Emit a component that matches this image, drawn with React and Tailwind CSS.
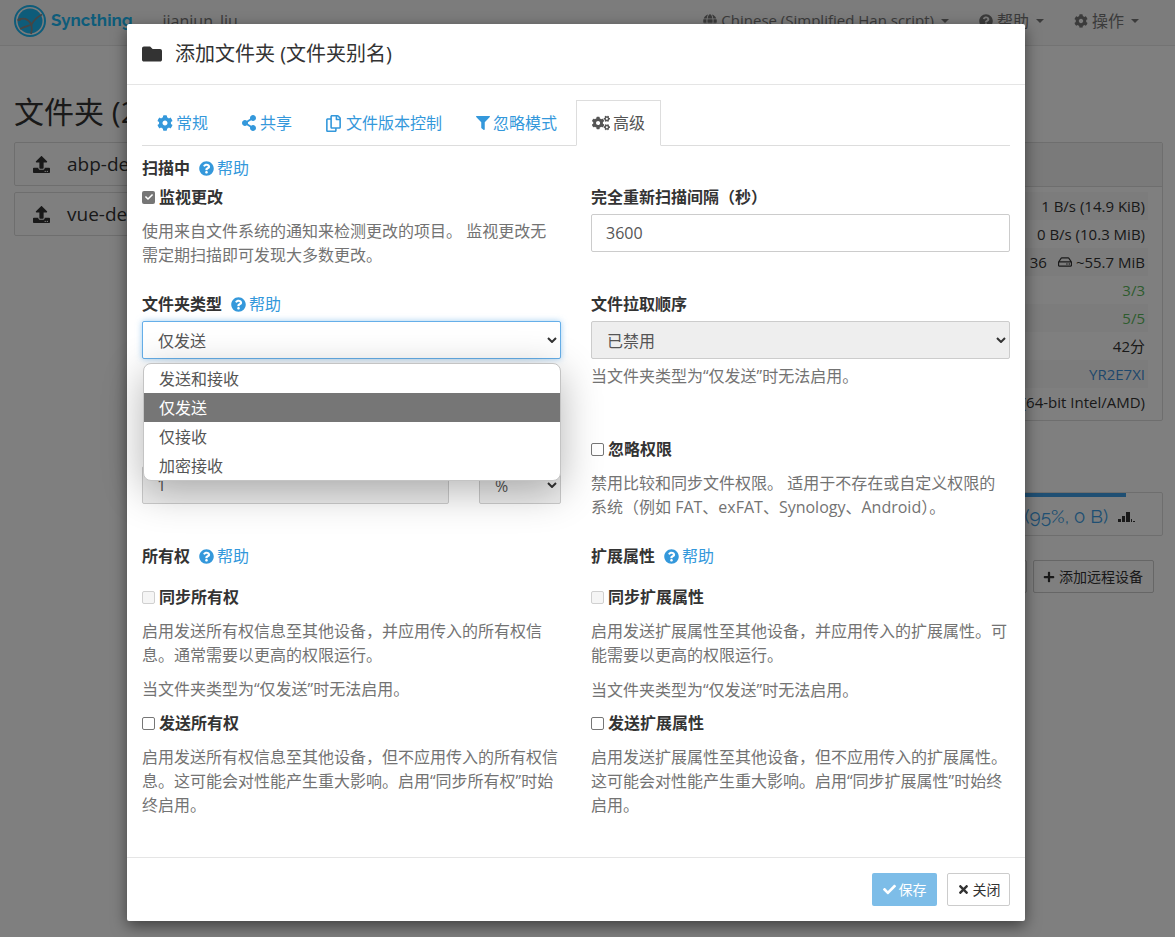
import { FaCheck, FaCog, FaCogs, FaFilter, FaFolder, FaGlobe, FaPlus, FaQuestionCircle, FaRegCopy, FaRegHdd, FaShareAlt, FaTimes, FaUpload } from "react-icons/fa";

const font = "font-['Open_Sans','Noto_Sans_CJK_SC',sans-serif]";

const statusRows = [
  ["rate-in", "1 B/s (14.9 KiB)", "text-[#333]"],
  ["rate-out", "0 B/s (10.3 MiB)", "text-[#333]"],
  ["state", "36", "text-[#333]"],
  ["listeners", "3/3", "text-[#5cb85c]"],
  ["discovery", "5/5", "text-[#5cb85c]"],
  ["uptime", "42分", "text-[#333]"],
  ["id", "YR2E7XI", "text-[#3e90d8]"],
  ["version", "(64-bit Intel/AMD)", "text-[#333]"],
];

function Logo() {
  return (
    <svg viewBox="0 0 32 32" className="h-8 w-8 shrink-0">
      <circle cx="16" cy="16" r="15" fill="none" stroke="#1cb8f5" strokeWidth="2" />
      <circle cx="16" cy="16" r="12.500" fill="#1cb8f5" />
      <path d="M3.500 15.500C9 11.500 14 14 17.500 19.500 20 15 23 12 28 9.500M17.500 19.500C14 21 10 22 6 24M17.500 19.500C18 23 18 26 17 29" fill="none" stroke="#8a8a8a" strokeWidth="1.800" />
      <circle cx="5.500" cy="14.500" r="1.500" fill="#8a8a8a" />
    </svg>
  );
}

function FolderPanel({ name }) {
  return (
    <div className="flex h-[44px] items-center rounded-[2px] border border-[#ddd] bg-white pl-[18px] text-[#333]">
      <FaUpload size={17} />
      <span className="ml-[17px] text-[19px]">{name}</span>
    </div>
  );
}

// page behind the modal
function Background() {
  return (
    <div className="flex h-[937px] flex-col overflow-hidden bg-white">
      <div className="flex h-[46px] shrink-0 items-center border-b border-[#e7e7e7] bg-[#f8f8f8] pb-[4px] pl-[14px] pr-[36px]">
        <Logo />
        <span className="ml-[5px] font-['Raleway','Open_Sans',sans-serif] text-[17px] font-bold text-[#1cb8f5]">Syncthing</span>
        <span className="ml-[30px] text-[16px] text-[#777]">jianjun_liu</span>
        <div className="ml-auto flex items-center text-[16px] text-[#777]">
          <FaGlobe size={14} />
          <span className="ml-1 text-[15px]">Chinese (Simplified Han script)</span>
          <span className="ml-[7px] h-0 w-0 border-x-4 border-t-4 border-x-transparent border-t-[#777]" />
          <FaQuestionCircle size={14} className="ml-[30px]" />
          <span className="ml-1">帮助</span>
          <span className="ml-[7px] h-0 w-0 border-x-4 border-t-4 border-x-transparent border-t-[#777]" />
          <FaCog size={14} className="ml-[30px]" />
          <span className="ml-1">操作</span>
          <span className="ml-[7px] h-0 w-0 border-x-4 border-t-4 border-x-transparent border-t-[#777]" />
        </div>
      </div>
      <div className="grid grid-cols-2 gap-[30px] pl-[14px] pr-[12px]">
        <div>
          <h1 className="mt-[45px] text-[30px] leading-[42px] text-[#333]">文件夹 (2)</h1>
          <div className="mt-[9px] flex flex-col gap-[6px]">
            <FolderPanel name="abp-de" />
            <FolderPanel name="vue-de" />
          </div>
        </div>
        <div className="pt-[96px]">
          <div className="rounded-[2px] border border-[#ddd] bg-white">
            <div className="h-[44px] border-b border-[#ddd] bg-[#f5f5f5]" />
            <div className="px-[14px] py-[5px] pb-[4px]">
              {statusRows.map(([key, value, color], i) => (
                <div key={key} className={`flex h-[28px] items-center justify-end px-[3px] text-[15px] ${color} ${i % 2 === 0 ? "bg-[#f9f9f9]" : ""}`}>
                  {value}
                  {i === 2 && (
                    <>
                      <FaRegHdd size={14} className="ml-[11px]" />
                      <span className="ml-1">~55.7 MiB</span>
                    </>
                  )}
                </div>
              ))}
            </div>
          </div>
          <div className="mt-[71px] h-[44px] rounded-[2px] border border-[#ddd] bg-white">
            <div className="h-[4px] w-[93.500%] bg-[#3e9fe6]" />
            <div className="flex h-[38px] items-center justify-end pr-[26px] font-['Raleway','Open_Sans',sans-serif] text-[19px] text-[#3e9fe6]">
              (95%, 0 B)
              <svg viewBox="0 0 18 12" className="ml-[10px] h-[12px] w-[18px]">
                <path d="M0 9h3v3H0zM4 6h3v6H4zM8 2h4v10H8zM13 9h1v3h-1zM15 11h2v1h-2z" fill="#333" />
              </svg>
            </div>
          </div>
          <div className="mt-[24px] flex justify-end gap-[6px]">
            <span className="h-[33px] w-[90px] rounded-[2px] border border-[#ccc] bg-white" />
            <span className="mr-[9px] flex h-[33px] items-center gap-1 rounded-[2px] border border-[#ccc] bg-white pl-[9px] pr-[10px] text-[14px] text-[#333]">
              <FaPlus size={12} />
              添加远程设备
            </span>
          </div>
        </div>
      </div>
    </div>
  );
}

function Tab({ icon, label, active, className = "mr-[3px]" }) {
  return (
    <div className={`mb-[-1px] flex h-[46px] items-center gap-[3px] px-[15px] text-[16px] ${className} ${active ? "border border-b-white border-[#ddd] bg-white text-[#555]" : "text-[#3498db]"}`}>
      {icon}
      <span>{label}</span>
    </div>
  );
}

function Help() {
  return (
    <span className="ml-[9px] inline-flex items-center gap-[3px] font-normal text-[#3498db]">
      <FaQuestionCircle size={15} />
      帮助
    </span>
  );
}

function Heading({ children, help, className = "" }) {
  return (
    <div className={`flex h-[24px] items-center text-[16px] font-bold text-[#333] ${className}`}>
      {children}
      {help && <Help />}
    </div>
  );
}

function Check({ label, state, className = "" }) {
  return (
    <div className={`flex h-[24px] items-center gap-[4px] text-[16px] font-bold text-[#333] ${className}`}>
      {state === "checked" && (
        <span className="flex h-[13px] w-[13px] items-center justify-center rounded-[2px] bg-[#767676] text-white">
          <FaCheck size={8} />
        </span>
      )}
      {state === "off" && <span className="h-[13px] w-[13px] rounded-[2px] border border-[#767676] bg-white" />}
      {state === "disabled" && <span className="h-[13px] w-[13px] rounded-[2px] border border-[#d0d0d0] bg-[#f5f5f5]" />}
      {label}
    </div>
  );
}

function Hint({ children, className = "" }) {
  return <p className={`text-[16px] leading-[24px] text-[#737373] ${className}`}>{children}</p>;
}

function SelectBox({ value, focused, disabled }) {
  return (
    <div className={`flex h-[38px] items-center justify-between rounded-[2px] border pl-[15px] pr-[3px] text-[16px] text-[#555] ${focused ? "border-[#66afe9] bg-white shadow-[0_0_6px_rgba(102,175,233,0.6)]" : "border-[#ccc]"} ${disabled ? "bg-[#eee]" : ""}`}>
      <span className="pt-px">{value}</span>
      <svg viewBox="0 0 10 6" className="h-[6px] w-[10px]">
        <path d="M1 1l4 4 4-4" fill="none" stroke="#333" strokeWidth="2" />
      </svg>
    </div>
  );
}

function Dropdown() {
  const options = ["发送和接收", "仅发送", "仅接收", "加密接收"];
  return (
    <div className="absolute left-px right-0 top-[42px] z-10 overflow-hidden rounded-[8px] border border-[#c4c4c4] bg-white text-[16px] text-[#555] shadow-[0_10px_40px_rgba(0,0,0,0.3)]">
      {options.map((opt) => (
        <div key={opt} className={`flex h-[29px] items-center pl-[15px] ${opt === "仅发送" ? "bg-[#767676] text-white" : ""}`}>
          {opt}
        </div>
      ))}
    </div>
  );
}

function Modal() {
  return (
    <div className="ml-[127px] mt-[24px] flex h-[897px] w-[898px] flex-col rounded-[2px] bg-white shadow-[0_5px_15px_rgba(0,0,0,0.5)]">
      <div className="flex h-[61px] shrink-0 items-center border-b border-[#e5e5e5] px-[15px]">
        <FaFolder size={20} className="text-[#333]" />
        <span className="ml-[13px] text-[20px] text-[#333]">添加文件夹 (文件夹别名)</span>
      </div>
      <div className="flex-1 px-[15px] pt-[15px]">
        <div className="flex border-b border-[#ddd]">
          <Tab icon={<FaCog size={16} />} label="常规" />
          <Tab icon={<FaShareAlt size={16} />} label="共享" />
          <Tab icon={<FaRegCopy size={17} className="mr-px" />} label="文件版本控制" className="mr-[4px]" />
          <Tab icon={<FaFilter size={14} />} label="忽略模式" className="mr-[4px]" />
          <Tab icon={<FaCogs size={18} />} label="高级" active />
        </div>

        <div className="grid grid-cols-2 gap-x-[30px] pt-[10px]">
          <div>
            <Heading help>扫描中</Heading>
            <Check label="监视更改" state="checked" className="mt-[5px]" />
            <Hint className="mt-[10px]">使用来自文件系统的通知来检测更改的项目。 监视更改无需定期扫描即可发现大多数更改。</Hint>
            <Heading help className="mt-[25px]">文件夹类型</Heading>
            <div className="relative mt-[5px]">
              <SelectBox value="仅发送" focused />
              <Dropdown />
            </div>
            {/* disk space row, its label is hidden by the open menu */}
            <div className="mt-[107px] flex gap-[30px]">
              <div className="flex h-[38px] flex-1 items-center rounded-[2px] border border-[#ccc] bg-[#eee] pl-[14px] text-[16px] text-[#555]">1</div>
              <div className="w-[82px]">
                <SelectBox value="%" disabled />
              </div>
            </div>
            <Heading help className="mt-[40px]">所有权</Heading>
            <Check label="同步所有权" state="disabled" className="mt-[17px]" />
            <Hint className="mt-[10px]">启用发送所有权信息至其他设备，并应用传入的所有权信息。通常需要以更高的权限运行。</Hint>
            <Hint className="mt-[10px]">当文件夹类型为“仅发送”时无法启用。</Hint>
            <Check label="发送所有权" state="off" className="mt-[10px]" />
            <Hint className="mt-[10px]">启用发送所有权信息至其他设备，但不应用传入的所有权信息。这可能会对性能产生重大影响。启用“同步所有权”时始终启用。</Hint>
          </div>

          <div>
            <Heading className="mt-[29px]">完全重新扫描间隔（秒）</Heading>
            <div className="mt-[5px] flex h-[38px] items-center rounded-[2px] border border-[#ccc] pl-[14px] text-[16px] text-[#555]">3600</div>
            <Heading className="mt-[40px]">文件拉取顺序</Heading>
            <div className="mt-[5px]">
              <SelectBox value="已禁用" disabled />
            </div>
            <Hint className="mt-[5px]">当文件夹类型为“仅发送”时无法启用。</Hint>
            <Check label="忽略权限" state="off" className="mt-[49px]" />
            <Hint className="mt-[10px]">禁用比较和同步文件权限。 适用于不存在或自定义权限的系统（例如 FAT、exFAT、Synology、Android）。</Hint>
            <Heading help className="mt-[25px]">扩展属性</Heading>
            <Check label="同步扩展属性" state="disabled" className="mt-[17px]" />
            <Hint className="mt-[10px]">启用发送扩展属性至其他设备，并应用传入的扩展属性。可能需要以更高的权限运行。</Hint>
            <Hint className="mt-[11px]">当文件夹类型为“仅发送”时无法启用。</Hint>
            <Check label="发送扩展属性" state="off" className="mt-[9px]" />
            <Hint className="mt-[10px]">启用发送扩展属性至其他设备，但不应用传入的扩展属性。这可能会对性能产生重大影响。启用“同步扩展属性”时始终启用。</Hint>
          </div>
        </div>
      </div>
      <div className="flex h-[64px] shrink-0 items-center justify-end gap-[10px] border-t border-[#e5e5e5] px-[15px]">
        <span className="flex h-[33px] w-[65px] items-center justify-center gap-[3px] rounded-[2px] bg-[#7dbde8] text-[14px] text-white">
          <FaCheck size={13} />
          保存
        </span>
        <span className="flex h-[33px] w-[63px] items-center justify-center gap-[3px] rounded-[2px] border border-[#ccc] bg-white text-[14px] text-[#333]">
          <FaTimes size={13} />
          关闭
        </span>
      </div>
    </div>
  );
}

export default function App() {
  return (
    <div className={`relative h-[937px] overflow-hidden ${font}`}>
      <Background />
      {/* backdrop */}
      <div className="absolute inset-0 bg-black/50">
        <Modal />
      </div>
    </div>
  );
}
